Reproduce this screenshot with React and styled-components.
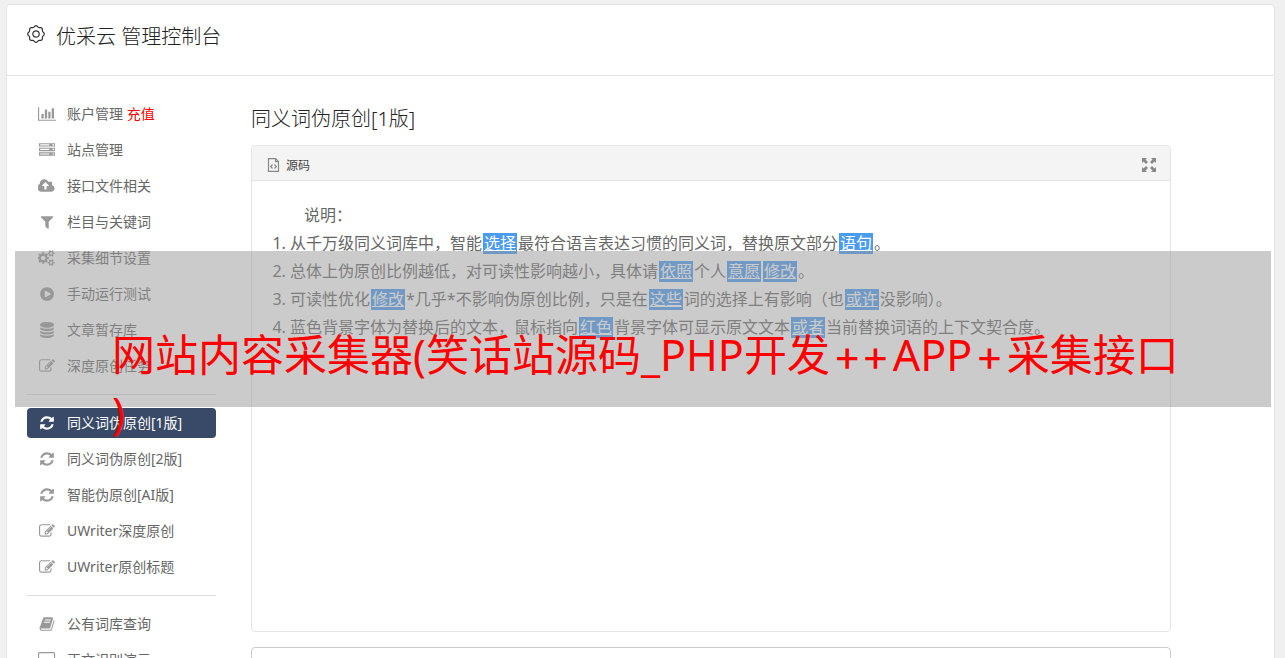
import React from 'react';
import styled, { createGlobalStyle } from 'styled-components';

const GlobalStyle = createGlobalStyle`
  * { box-sizing: border-box; }
  html, body, #root { height: 100%; }
  body {
    margin: 0;
    overflow: hidden;
    background: #f0f0f0;
    color: #666;
    font-family: "Noto Sans", "Noto Sans CJK SC", sans-serif;
    font-weight: 400;
    font-size: 14px;
  }
`;

const Page = styled.div`
  height: 100%;
  padding: 4px 10px 0 6px;
  overflow: hidden;
  position: relative;
`;

const Panel = styled.div`
  background: #fff;
  border: 1px solid #e4e4e4;
  border-radius: 4px;
`;

const Header = styled.header`
  display: flex;
  align-items: flex-start;
  gap: 11px;
  height: 71px;
  padding: 17px 20px 0;
  border-bottom: 1px solid #e4e4e4;
`;

const HeaderIcon = styled.svg`
  margin-top: 3px;
  flex: none;
`;

const Title = styled.h1`
  margin: 0;
  font-size: 20px;
  line-height: 30px;
  font-weight: 300;
  color: #222;
`;

const Columns = styled.div`
  display: flex;
  gap: 35px;
  padding: 20px;
`;

const Sidebar = styled.nav`
  flex: 0 0 189px;
  padding-top: 3px;
`;

const MenuList = styled.ul`
  list-style: none;
  margin: 0;
  padding: 0;
  display: flex;
  flex-direction: column;
  gap: 6px;
  & + & {
    margin-top: 13px;
    padding-top: 13px;
    border-top: 1px solid #ddd;
  }
`;

const MenuLink = styled.a`
  display: flex;
  align-items: center;
  gap: 10px;
  height: 30px;
  padding-left: 10px;
  border-radius: 4px;
  text-decoration: none;
  white-space: nowrap;
  line-height: 20px;
  color: ${(p) => (p.$active ? '#fff' : '#666')};
  background: ${(p) => (p.$active ? '#384a67' : 'transparent')};
  svg { fill: ${(p) => (p.$active ? '#fff' : '#999')}; }
`;

const IconSlot = styled.span`
  flex: 0 0 20px;
  display: flex;
  justify-content: center;
`;

const Recharge = styled.span`
  color: #f00;
`;

const Main = styled.main`
  flex: 1;
  min-width: 0;
  padding-right: 83px;
`;

const SectionTitle = styled.h2`
  margin: 8px 0 11px;
  font-size: 20px;
  line-height: 30px;
  font-weight: 300;
  color: #222;
`;

const Editor = styled.section`
  border: 1px solid #e4e4e4;
  border-radius: 4px;
  overflow: hidden;
`;

const Toolbar = styled.div`
  display: flex;
  align-items: center;
  justify-content: space-between;
  height: 35px;
  padding: 3px 13px 0 15px;
  background: #f4f4f4;
  border-bottom: 1px solid #e4e4e4;
`;

const ToolButton = styled.button`
  display: flex;
  align-items: center;
  gap: 6px;
  padding: 0;
  border: 0;
  background: none;
  font: inherit;
  font-size: 12px;
  color: #444;
`;

const Document = styled.div`
  height: 450px;
  padding: 20px 20px 0;
  font-size: 16px;
  line-height: 28px;
`;

const Lead = styled.p`
  margin: 0;
  padding-left: 32px;
`;

const Notes = styled.ol`
  margin: 0;
  padding-left: 18px;
  white-space: nowrap;
`;

const Mark = styled.span`
  display: inline-block;
  height: 21px;
  line-height: 21px;
  padding: 0 1px;
  margin: 0 1px;
  background: #4a9bf2;
  color: #fff;
  text-decoration: underline;
  text-decoration-thickness: 1px;
`;

const ResultBox = styled.textarea`
  display: block;
  width: 100%;
  height: 120px;
  margin-top: 15px;
  border: 1px solid #ccc;
  border-radius: 4px;
  resize: none;
`;

const Banner = styled.div`
  position: absolute;
  top: 251px;
  left: 15px;
  right: 14px;
  height: 156px;
  padding: 75px 88px 0 97px;
  background: rgba(151, 151, 151, 0.5);
  color: #f00;
  font-size: 43px;
  line-height: 58px;
  word-break: break-all;
  line-break: anywhere;
`;

const Plus = styled.span`
  margin: 0 3px;
  font-family: Inter, sans-serif;
`;

const PATHS = {
  chart: [2048, 'M640 896v512h-256v-512h256zm384-512v1024h-256v-1024h256zm1024 1152v128h-2048v-1536h128v1408h1920zm-640-896v768h-256v-768h256zm384-384v1152h-256v-1152h256z'],
  server: [1792, 'M128 1408h1024v-128h-1024v128zm0-512h1024v-128h-1024v128zm1568 448q0-40-28-68t-68-28-68 28-28 68 28 68 68 28 68-28 28-68zm-1568-960h1024v-128h-1024v128zm1568 448q0-40-28-68t-68-28-68 28-28 68 28 68 68 28 68-28 28-68zm0-512q0-40-28-68t-68-28-68 28-28 68 28 68 68 28 68-28 28-68zm96 832v384h-1792v-384h1792zm0-512v384h-1792v-384h1792zm0-512v384h-1792v-384h1792z'],
  upload: [1920, 'M1216 864q0-14-9-23l-352-352q-9-9-23-9t-23 9l-351 351q-10 12-10 24 0 14 9 23t23 9h224v352q0 13 9.5 22.5t22.5 9.5h192q13 0 22.5-9.5t9.5-22.5v-352h224q13 0 22.5-9.5t9.5-22.5zm640 288q0 159-112.5 271.5t-271.5 112.5h-1088q-185 0-316.5-131.5t-131.5-316.5q0-130 70-240t188-165q-2-30-2-43 0-212 150-362t362-150q156 0 285.5 87t188.5 231q71-62 166-62 106 0 181 75t75 181q0 76-41 138 130 31 213.5 135.5t83.5 238.5z'],
  filter: [1792, 'M1595 295q17 41-14 70l-493 493v742q0 42-39 59-13 5-25 5-27 0-45-19l-256-256q-19-19-19-45v-486l-493-493q-31-29-14-70 17-39 59-39h1280q42 0 59 39z'],
  cogs: [1920, 'M832 896q0-106-75-181t-181-75-181 75-75 181 75 181 181 75 181-75 75-181zm768 512q0-52-38-90t-90-38-90 38-38 90q0 53 37.5 90.5t90.5 37.5 90.5-37.5 37.5-90.5zm0-1024q0-52-38-90t-90-38-90 38-38 90q0 53 37.5 90.5t90.5 37.5 90.5-37.5 37.5-90.5zm-384 421v185q0 10-7 19.5t-16 10.5l-155 24q-11 35-32 76 34 48 90 115 7 11 7 20 0 12-7 19-23 30-82.5 89.5t-78.5 59.5q-11 0-21-7l-115-90q-37 19-77 31-11 108-23 155-7 24-30 24h-186q-11 0-20-7.5t-10-17.5l-23-153q-34-10-75-31l-118 89q-7 7-20 7-11 0-21-8-144-133-144-160 0-9 7-19 10-14 41-53t47-61q-23-44-35-82l-152-24q-10-1-17-9.5t-7-19.5v-185q0-10 7-19.5t16-10.5l155-24q11-35 32-76-34-48-90-115-7-11-7-20 0-12 7-20 22-30 82-89t79-59q11 0 21 7l115 90q34-18 77-32 11-108 23-154 7-24 30-24h186q11 0 20 7.5t10 17.5l23 153q34 10 75 31l118-89q8-7 20-7 11 0 21 8 144 133 144 160 0 8-7 19-12 16-42 54t-45 60q23 48 34 82l152 23q10 2 17 10.5t7 19.5zm640 533v140q0 16-149 31-12 27-30 52 51 113 51 138 0 4-4 7-122 71-124 71-8 0-46-47t-52-68q-20 2-30 2t-30-2q-14 21-52 68t-46 47q-2 0-124-71-4-3-4-7 0-25 51-138-18-25-30-52-149-15-149-31v-140q0-16 149-31 13-29 30-52-51-113-51-138 0-4 4-7 4-2 35-20t59-34 30-16q8 0 46 46.5t52 67.5q20-2 30-2t30 2q51-71 92-112l6-2q4 0 124 70 4 3 4 7 0 25-51 138 17 23 30 52 149 15 149 31zm0-1024v140q0 16-149 31-12 27-30 52 51 113 51 138 0 4-4 7-122 71-124 71-8 0-46-47t-52-68q-20 2-30 2t-30-2q-14 21-52 68t-46 47q-2 0-124-71-4-3-4-7 0-25 51-138-18-25-30-52-149-15-149-31v-140q0-16 149-31 13-29 30-52-51-113-51-138 0-4 4-7 4-2 35-20t59-34 30-16q8 0 46 46.5t52 67.5q20-2 30-2t30 2q51-71 92-112l6-2q4 0 124 70 4 3 4 7 0 25-51 138 17 23 30 52 149 15 149 31z'],
  play: [1792, 'M896 128q209 0 385.5 103t279.5 279.5 103 385.5-103 385.5-279.5 279.5-385.5 103-385.5-103-279.5-279.5-103-385.5 103-385.5 279.5-279.5 385.5-103zm384 823q32-18 32-55t-32-55l-544-320q-31-19-64-1-32 19-32 56v640q0 37 32 56 16 8 32 8 17 0 32-9z'],
  database: [1792, 'M896 768q237 0 443-43t325-127v170q0 69-103 128t-280 93.5-385 34.5-385-34.5-280-93.5-103-128v-170q119 84 325 127t443 43zm0 768q237 0 443-43t325-127v170q0 69-103 128t-280 93.5-385 34.5-385-34.5-280-93.5-103-128v-170q119 84 325 127t443 43zm0-384q237 0 443-43t325-127v170q0 69-103 128t-280 93.5-385 34.5-385-34.5-280-93.5-103-128v-170q119 84 325 127t443 43zm0-1152q208 0 385 34.5t280 93.5 103 128v128q0 69-103 128t-280 93.5-385 34.5-385-34.5-280-93.5-103-128v-128q0-69 103-128t280-93.5 385-34.5z'],
  edit: [1792, 'M888 1184l116-116-152-152-116 116v56h96v96h56zm440-720q-16-16-33 1l-350 350q-17 17-1 33t33-1l350-350q17-17 1-33zm80 594v190q0 119-84.5 203.5t-203.5 84.5h-832q-119 0-203.5-84.5t-84.5-203.5v-832q0-119 84.5-203.5t203.5-84.5h832q63 0 117 25 15 7 18 23 3 17-9 29l-49 49q-14 14-32 8-23-6-45-6h-832q-66 0-113 47t-47 113v832q0 66 47 113t113 47h832q66 0 113-47t47-113v-126q0-13 9-22l64-64q15-15 35-7t20 29zm-96-738l288 288-672 672h-288v-288zm444 132l-92 92-288-288 92-92q28-28 68-28t68 28l152 152q28 28 28 68t-28 68z'],
  refresh: [1792, 'M1639 1056q0 5-1 7-64 268-268 434.5t-478 166.5q-146 0-282.5-55t-243.5-157l-129 129q-19 19-45 19t-45-19-19-45v-448q0-26 19-45t45-19h448q26 0 45 19t19 45-19 45l-137 137q71 66 161 102t187 36q134 0 250-65t186-179q11-17 53-117 8-23 30-23h192q13 0 22.5 9.5t9.5 22.5zm25-800v448q0 26-19 45t-45 19h-448q-26 0-45-19t-19-45 19-45l138-138q-148-137-349-137-134 0-250 65t-186 179q-11 17-53 117-8 23-30 23h-199q-13 0-22.5-9.5t-9.5-22.5v-7q65-268 270-434.5t480-166.5q146 0 284 55.5t245 156.5l130-129q19-19 45-19t45 19 19 45z'],
  book: [1792, 'M1703 478q40 57 18 129l-275 906q-19 64-76.5 107.5t-122.5 43.5h-923q-77 0-148.5-53.5t-99.5-131.5q-24-67-2-127 0-4 3-27t4-37q1-8-3-21.5t-3-19.5q2-11 8-21t16.5-23.5 16.5-23.5q23-38 45-91.5t30-91.5q3-10 .5-30t-.5-28q3-11 17-28t17-23q21-36 42-92t25-90q1-9-2.5-32t.5-28q4-13 22-30.5t22-22.5q19-26 42.5-84.5t27.5-96.5q1-8-3-25.5t-2-26.5q2-8 9-18t18-23 17-21q8-12 16.5-30.5t15-35 16-36 19.5-32 26.5-23.5 36-11.5 47.5 5.5l-1 3q38-9 51-9h761q74 0 114 56t18 130l-274 906q-36 119-71.5 153.5t-128.5 34.5h-869q-27 0-38 15-11 16-1 43 24 70 144 70h923q29 0 56-15.5t35-41.5l300-987q7-22 5-57 38 15 59 43zm-1064 2q-4 13 2 22.5t20 9.5h608q13 0 25.5-9.5t16.5-22.5l21-64q4-13-2-22.5t-20-9.5h-608q-13 0-25.5 9.5t-16.5 22.5zm-83 256q-4 13 2 22.5t20 9.5h608q13 0 25.5-9.5t16.5-22.5l21-64q4-13-2-22.5t-20-9.5h-608q-13 0-25.5 9.5t-16.5 22.5z'],
  screen: [1920, 'M1792 992v-832q0-13-9.500-22.500t-22.500-9.500h-1600q-13 0-22.500 9.500t-9.500 22.500v832q0 13 9.500 22.500t22.500 9.500h1600q13 0 22.500-9.500t9.500-22.500zm128-832v1088q0 66-47 113t-113 47h-544q0 37 16 77.500t32 71 16 43.500q0 26-19 45t-45 19h-512q-26 0-45-19t-19-45q0-14 16-44t32-70 16-78h-544q-66 0-113-47t-47-113v-1088q0-66 47-113t113-47h1600q66 0 113 47t47 113z'],
};

function MenuIcon({ name }) {
  const [width, d] = PATHS[name];
  return (
    <IconSlot>
      <svg width={(width / 1792) * 16} height="16" viewBox={`0 0 ${width} 1792`} aria-hidden="true">
        <path d={d} />
      </svg>
    </IconSlot>
  );
}

function gearPath() {
  const points = [];
  for (let i = 0; i <= 96; i += 1) {
    const a = (i / 96) * Math.PI * 2;
    const r = 7.7 + 0.6 * Math.cos(a * 8);
    points.push(`${(9 + r * Math.sin(a)).toFixed(2)} ${(9 - r * Math.cos(a)).toFixed(2)}`);
  }
  return `M${points.join('L')}Z`;
}

const GEAR = gearPath();

const MENU = [
  [
    { icon: 'chart', label: '账户管理', extra: '充值' },
    { icon: 'server', label: '站点管理' },
    { icon: 'upload', label: '接口文件相关' },
    { icon: 'filter', label: '栏目与关键词' },
    { icon: 'cogs', label: '采集细节设置' },
    { icon: 'play', label: '手动运行测试' },
    { icon: 'database', label: '文章暂存库' },
    { icon: 'edit', label: '深度原创任务' },
  ],
  [
    { icon: 'refresh', label: '同义词伪原创[1版]', active: true },
    { icon: 'refresh', label: '同义词伪原创[2版]' },
    { icon: 'refresh', label: '智能伪原创[AI版]' },
    { icon: 'edit', label: 'UWriter深度原创' },
    { icon: 'edit', label: 'UWriter原创标题' },
  ],
  [
    { icon: 'book', label: '公有词库查询' },
    { icon: 'screen', label: '正文识别演示' },
  ],
];

export default function App() {
  return (
    <>
      <GlobalStyle />
      <Page>
        <Panel>
          <Header>
            <HeaderIcon width="18" height="18" viewBox="0 0 18 18" fill="none" stroke="#333" strokeWidth="1.2" aria-hidden="true">
              <path d={GEAR} />
              <circle cx="9" cy="9" r="3.2" />
            </HeaderIcon>
            <Title>优采云 管理控制台</Title>
          </Header>
          <Columns>
            <Sidebar>
              {MENU.map((group) => (
                <MenuList key={group[0].label}>
                  {group.map((item) => (
                    <li key={item.label}>
                      <MenuLink href="#" $active={item.active}>
                        <MenuIcon name={item.icon} />
                        <span>
                          {item.label}
                          {item.extra && <> <Recharge>{item.extra}</Recharge></>}
                        </span>
                      </MenuLink>
                    </li>
                  ))}
                </MenuList>
              ))}
            </Sidebar>
            <Main>
              <SectionTitle>同义词伪原创[1版]</SectionTitle>
              <Editor>
                <Toolbar>
                  <ToolButton type="button">
                    <svg width="13" height="14" viewBox="0 0 13 14" fill="none" stroke="#888" strokeWidth="1.2" aria-hidden="true">
                      <path d="M1.500 .6H8.500L11.500 3.600V13.400H1.500Z" />
                      <path d="M8.500 .6V3.600H11.500" />
                      <path d="M5.500 6.500L3.700 8.500L5.500 10.500M7.500 6.500L9.300 8.500L7.500 10.500" />
                    </svg>
                    源码
                  </ToolButton>
                  <ToolButton type="button" aria-label="全屏">
                    <svg width="16" height="16" viewBox="0 0 16 16" fill="#888" aria-hidden="true">
                      <path d="M1 1h5L4.500 2.500 7 5 5 7 2.500 4.500 1 6zM15 1v5l-1.500-1.500L11 7 9 5l2.500-2.500L10 1zM1 15v-5l1.500 1.500L5 9l2 2-2.500 2.500L6 15zM15 15h-5l1.500-1.500L9 11l2-2 2.500 2.500L15 10z" />
                    </svg>
                  </ToolButton>
                </Toolbar>
                <Document>
                  <Lead>说明：</Lead>
                  <Notes>
                    <li>从千万级同义词库中，智能<Mark>选择</Mark>最符合语言表达习惯的同义词，替换原文部分<Mark>语句</Mark>。</li>
                    <li>总体上伪原创比例越低，对可读性影响越小，具体请<Mark>依照</Mark>个人<Mark>意愿</Mark><Mark>修改</Mark>。</li>
                    <li>可读性优化<Mark>修改</Mark>*几乎*不影响伪原创比例，只是在<Mark>这些</Mark>词的选择上有影响（也<Mark>或许</Mark>没影响）。</li>
                    <li>蓝色背景字体为替换后的文本，鼠标指向<Mark>红色</Mark>背景字体可显示原文文本<Mark>或者</Mark>当前替换词语的上下文契合度。</li>
                  </Notes>
                </Document>
              </Editor>
              <ResultBox aria-label="结果" />
            </Main>
          </Columns>
        </Panel>
        <Banner>
          网站内容采集器(笑话站源码_PHP开发<Plus>++</Plus>APP<Plus>+</Plus>采集接口)
        </Banner>
      </Page>
    </>
  );
}
